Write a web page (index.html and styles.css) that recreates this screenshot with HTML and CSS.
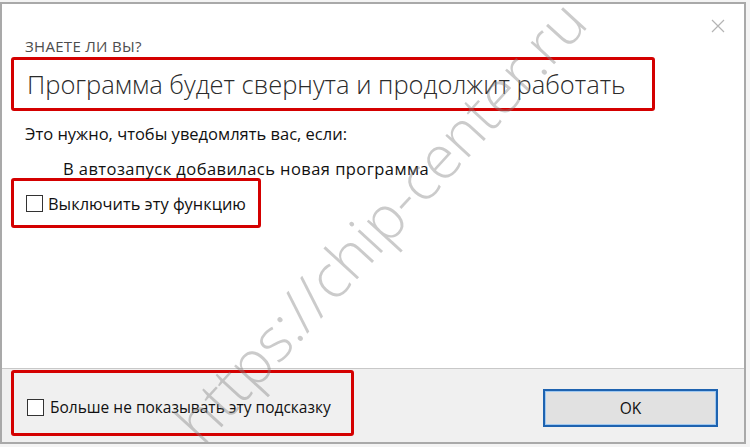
FILE: index.html
```html
<!DOCTYPE html>
<html lang="ru">
<head>
<meta charset="utf-8">
<title>Знаете ли вы?</title>
<link rel="stylesheet" href="styles.css">
</head>
<body>
<div class="dialog">
  <div class="main">
    <button class="close" aria-label="Закрыть">
      <svg width="14" height="14" viewBox="0 0 14 14"><path d="M1 1L13 13M13 1L1 13" stroke="#b4b4b4" stroke-width="1.2" fill="none"/></svg>
    </button>
    <div class="kicker">ЗНАЕТЕ ЛИ ВЫ?</div>
    <div class="hl hl-title"><h1 class="title">Программа будет свернута и продолжит работать</h1></div>
    <p class="intro">Это нужно, чтобы уведомлять вас, если:</p>
    <p class="item">В автозапуск добавилась новая программа</p>
    <div class="hl hl-check"><label class="check check-off"><span class="cb"></span><span>Выключить эту функцию</span></label></div>
  </div>
  <div class="footer">
    <div class="hl hl-foot"><label class="check check-hint"><span class="cb"></span><span>Больше не показывать эту подсказку</span></label></div>
    <button class="ok">OK</button>
  </div>
  <div class="watermark">https://chip-center.ru</div>
</div>
</body>
</html>
```
FILE: styles.css
```css
html, body {
  margin: 0;
  padding: 0;
  background: #f4f4f4;
}
body {
  width: 750px;
  height: 447px;
  overflow: hidden;
  font-family: "Open Sans", "Noto Sans", sans-serif;
  color: #111;
}
.dialog {
  position: relative;
  margin: 2px 0 0 0;
  width: 746px;
  height: 442px;
  box-sizing: border-box;
  border: 2px solid #a9a9a9;
  background: #fff;
  display: flex;
  flex-direction: column;
  overflow: hidden;
}
.main {
  position: relative;
  flex: 1;
  padding: 0 0 0 9px;
}
.close {
  position: absolute;
  top: 15px;
  right: 19px;
  width: 14px;
  height: 14px;
  padding: 0;
  border: 0;
  background: none;
  display: flex;
}
.kicker {
  margin: 32px 0 0 14px;
  font-size: 15px;
  letter-spacing: 0.3px;
  line-height: 20px;
  color: #4d4d4d;
}
.hl {
  border: 3px solid #d40000;
  border-radius: 3px;
  box-sizing: border-box;
}
.hl-title {
  margin-top: 1px;
  width: 644px;
  height: 54px;
  display: flex;
  align-items: center;
}
.title {
  margin: 0 0 0 13px;
  font-size: 25.5px;
  font-weight: 300;
  color: #2b2b2b;
  line-height: 30px;
  white-space: nowrap;
}
.intro {
  margin: 13px 0 0 14px;
  font-size: 16.5px;
  line-height: 20px;
}
.item {
  margin: 16px 0 0 52px;
  font-size: 16.5px;
  letter-spacing: 0.44px;
  line-height: 18px;
}
.hl-check {
  margin-top: 0;
  width: 250px;
  height: 50px;
  display: flex;
  align-items: center;
  padding-left: 12px;
}
.check {
  display: flex;
  align-items: center;
  gap: 5px;
}
.check-off {
  font-size: 16.4px;
}
.check-hint {
  font-size: 15.5px;
  gap: 6px;
}
.cb {
  width: 15px;
  height: 15px;
  border: 1px solid #333;
  background: #fff;
  flex: none;
}
.footer {
  height: 74px;
  border-top: 1px solid #c8c8c8;
  background: #f0f0f0;
  display: flex;
  align-items: flex-start;
  padding: 1px 0 0 9px;
  box-sizing: border-box;
}
.hl-foot {
  width: 343px;
  height: 66px;
  display: flex;
  align-items: center;
  padding: 8px 0 0 13px;
}
.ok {
  margin: 19px 0 0 189px;
  width: 175px;
  height: 38px;
  border: 2px solid #1e63b0;
  background: #e1e1e1;
  font-family: inherit;
  font-size: 15.5px;
  color: #111;
  box-shadow: inset 0 0 0 1px #9fc8f0;
}
.watermark {
  position: absolute;
  left: 184px;
  top: 398px;
  font-family: "Open Sans", sans-serif;
  font-weight: 300;
  font-size: 60px;
  line-height: 60px;
  color: rgba(130, 130, 130, 0.42);
  white-space: nowrap;
  transform: rotate(-47.5deg);
  transform-origin: 0 50%;
  pointer-events: none;
}
```
